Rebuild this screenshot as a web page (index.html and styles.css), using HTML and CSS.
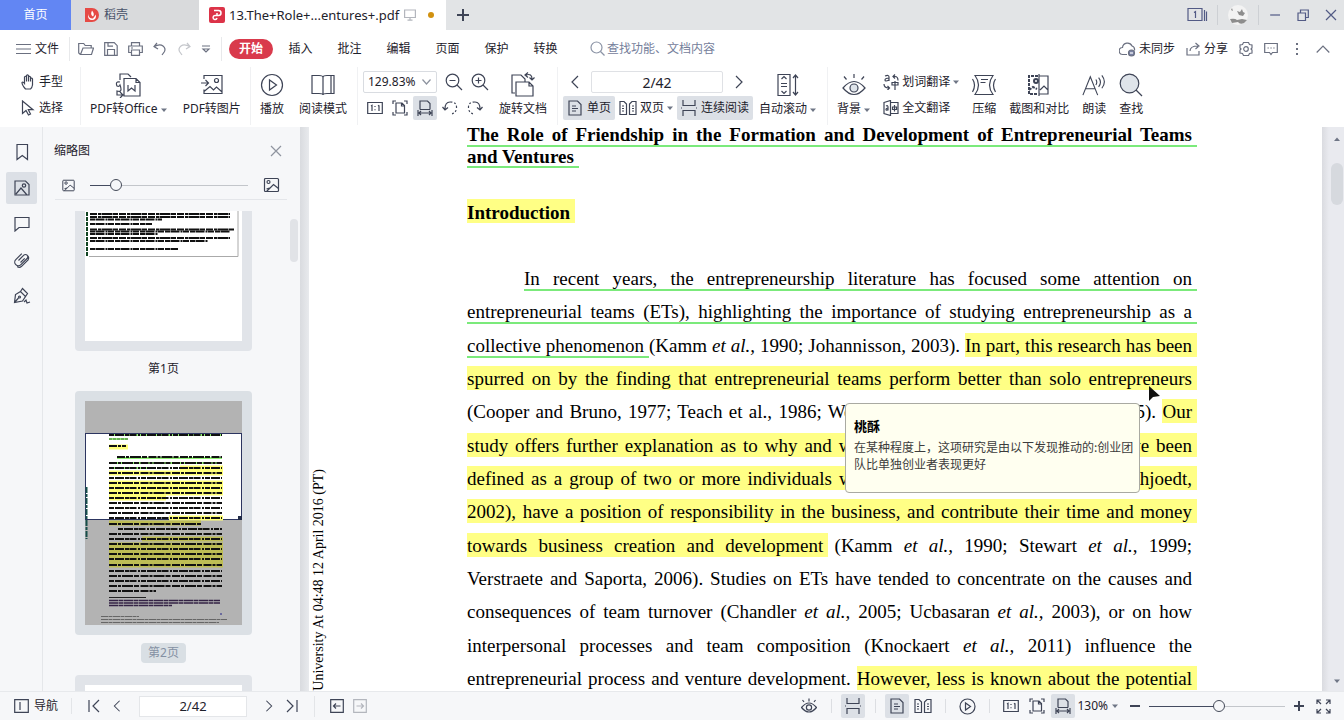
FILE: index.html
```html
<!DOCTYPE html>
<html lang="zh-CN">
<head>
<meta charset="utf-8">
<meta name="viewport" content="width=device-width, initial-scale=1">
<title>13.The+Role+...entures+.pdf</title>
<link rel="stylesheet" href="styles.css">
</head>
<body>
<svg class="defs" aria-hidden="true">
  <symbol id="one" viewBox="0 0 16 16"><path d="M.7 2.5h14.6v11H.7zM4 6l1-.7V11M12 5.3V11M11 6l1-.7M8 6v1M8 9.3v1"/></symbol>
  <symbol id="fit" viewBox="0 0 16 16"><path d="M4 3h6l2.500 2.500V13H4zM9.500 3v3h3M1 4V1h3M12 1h3v3M1 12v3h3M12 15h3v-3"/></symbol>
  <symbol id="fitw" viewBox="0 0 16 16"><path d="M3 9.500V1h7.500l2.500 2.500v6M3 9.500h10M1 10v6M15 10v6M2 13h12M4 11l-2 2 2 2M12 11l2 2-2 2"/></symbol>
  <symbol id="single" viewBox="0 0 16 16"><path d="M2 1h8.500L14 4.500V15H2zM5 6h4M5 8.500h6M5 11h4"/></symbol>
  <symbol id="double" viewBox="0 0 18 16"><path d="M1 1.500h4l2.500 2.500v10.500H1zM17 1.500h-4L10.500 4v10.500H17zM3 6h2M3 8.500h2M3 11h2M13 6h2M13 8.500h2M13 11h2"/></symbol>
  <symbol id="cont" viewBox="0 0 16 16"><path d="M2 0v5.500h12V0M2 16v-5.500h12V16M0 8h1M15 8h1"/></symbol>
  <symbol id="left" viewBox="0 0 16 16"><path d="M11 2L5 8l6 6"/></symbol>
  <symbol id="right" viewBox="0 0 16 16"><path d="M5 2l6 6-6 6"/></symbol>
  <symbol id="caret" viewBox="0 0 6 4"><path class="solid" d="M0 .5h6L3 4z"/></symbol>
  <symbol id="play" viewBox="0 0 24 24"><circle cx="12" cy="12" r="10.500"/><path d="M9.500 7v10l7-5z"/></symbol>
  <symbol id="eye" viewBox="0 0 24 24"><path d="M1 15q11-13 22 0-11 13-22 0zM12 1v4M2 3.500l2.500 3M22 3.500l-2.500 3"/><circle cx="12" cy="15" r="4" class="tint"/></symbol>
  <symbol id="eye-small" viewBox="0 0 16 16"><path d="M.5 9.500q7.500-9 15 0-7.500 9-15 0zM8 .5v3M1.500 2l1.500 2M14.500 2L13 4"/><circle cx="8" cy="9.500" r="2.600"/></symbol>
  <symbol id="picture" viewBox="0 0 16 16"><rect x="1" y="1.500" width="14" height="13" rx="1"/><circle cx="5" cy="5" r="1.500"/><path d="M3 14.500l7-7 5 4M6 11l-3 1"/></symbol>
</svg>

<header class="titlebar">
  <nav class="tabs">
    <button class="tab home">首页</button>
    <button class="tab docer">
      <svg width="14" height="14" viewBox="0 0 14 14" stroke="none" class="flat"><path d="M0 0h7a7 7 0 0 1 7 7 7 7 0 0 1-7 7H0z" fill="#e64a45"/><path d="M7 2.500q3 3.500 1 6Q5 7 7 2.500zM3 6q1 5 5 4.500l3-4q.5 5.500-4 5.500T3 6z" fill="#fff"/></svg>
      <span>稻壳</span>
    </button>
    <button class="tab active">
      <svg width="16" height="16" viewBox="0 0 16 16" class="flat"><rect width="16" height="16" rx="2" fill="#dc3348"/><path d="M5 3.500h4.500a2.500 2.500 0 0 1 0 5H8V6M8 8.500H6a2 2 0 1 0 2 2.500" fill="none" stroke="#fff" stroke-width="1.500"/></svg>
      <span class="file-name">13.The+Role+...entures+.pdf</span>
      <svg class="pale" width="12" height="12" viewBox="0 0 12 12"><path d="M.6 1h10.800v7.500H.6zM6 8.500V11M3.500 11.200h5"/></svg>
      <i class="dot"></i>
    </button>
    <button class="tab plus" aria-label="新建标签"><svg width="12" height="12" viewBox="0 0 12 12"><path d="M6 0v12M0 6h12" stroke-width="2"/></svg></button>
  </nav>
  <div class="window-tools">
    <button aria-label="窗口数"><svg width="22" height="16" viewBox="0 0 22 16"><path d="M1 1.500h14v12H1zM17.500 3v11M19.500 4.500V14M7 5.500l1.500-1V11"/></svg></button>
    <button class="user" aria-label="账户"><svg width="20" height="20" viewBox="0 0 20 20" class="flat"><circle cx="10" cy="10" r="10" fill="#f3f3f3"/><path d="M9 6l3 1 2-3 1 3 2 1-2 3-4-1zM2 14q5-1 7 1l5-1 5 1-3 3q-4 2-6-1l-6 1zM3 5l1-2 1 3z" fill="#8d8d8d"/></svg></button>
    <button aria-label="最小化"><svg width="12" height="12" viewBox="0 0 12 12"><path d="M1 6h10"/></svg></button>
    <button aria-label="还原"><svg width="12" height="12" viewBox="0 0 12 12"><path d="M1 4h7.500v7.500H1zM3.500 4V1H11.300v7.500H8.500"/></svg></button>
    <button aria-label="关闭"><svg width="12" height="12" viewBox="0 0 12 12"><path d="M1 1l10 10M11 1L1 11"/></svg></button>
  </div>
</header>

<div class="menubar">
  <button class="file-menu"><svg width="15" height="12" viewBox="0 0 15 12"><path d="M0 1.500h15M0 6h15M0 10.500h15"/></svg>文件</button>
  <div class="quick">
    <button aria-label="打开"><svg width="16" height="14" viewBox="0 0 16 14"><path d="M2.500 12.500L.7 11V1.500h5l1.500 2h6V6M2.500 12.500L5 6h10.500l-2 6.500z"/></svg></button>
    <button aria-label="保存"><svg width="14" height="14" viewBox="0 0 14 14"><path d="M.7.700h9.500l3 3v9.600H.7zM3.500 13V7.500h7V13M4 .7v3.500h5"/></svg></button>
    <button aria-label="打印"><svg width="15" height="14" viewBox="0 0 15 14"><path d="M3.500 4V.7h8V4M3.500 10.500H.7V4h13.600v6.500h-2.800M3.500 8h8v5.300h-8zM3 6h2"/></svg></button>
    <button aria-label="撤销"><svg width="14" height="14" viewBox="0 0 14 14"><path d="M4 1L1 4.500 5 7M1 4.500q6-3 9-.5t1.500 5.500L9 13"/></svg></button>
    <button class="pale" aria-label="重做"><svg width="14" height="14" viewBox="0 0 14 14"><path d="M10 1l3 3.500L9 7M13 4.500q-6-3-9-.5T2.500 9.500L5 13"/></svg></button>
    <button aria-label="更多"><svg width="10" height="10" viewBox="0 0 10 10"><path d="M1 2h8M2 5l3 3 3-3z"/></svg></button>
  </div>
  <nav class="menus">
    <button class="current">开始</button>
    <button>插入</button><button>批注</button><button>编辑</button><button>页面</button><button>保护</button><button>转换</button>
  </nav>
  <label class="search"><svg width="15" height="15" viewBox="0 0 15 15"><circle cx="6.500" cy="6.500" r="5.500"/><path d="M10.500 10.500l4 4"/></svg><input type="text" placeholder="查找功能、文档内容"></label>
  <div class="menu-right">
    <button><svg width="17" height="16" viewBox="0 0 17 16"><path d="M8 13.500H4A3.500 3.500 0 0 1 3.500 6.500 5 5 0 0 1 13 5q3 .8 2.500 4.500"/><circle cx="12.500" cy="12" r="3" fill="#7b83a6"/><path d="M11 12h3" class="white"/></svg>未同步</button>
    <button><svg width="15" height="14" viewBox="0 0 15 14"><path d="M1 6v7h12V9M4 9q0-5 8-5M9.500 1l3.500 3-3.500 3"/></svg>分享</button>
    <button aria-label="设置"><svg width="14" height="16" viewBox="0 0 14 16"><path d="M4.500 1.500h5l1 2 2.500.5v3l-1 1 1 1v3l-2.500.5-1 2h-5l-1-2L1 12V9l1-1-1-1V4l2.500-.5z"/><circle cx="7" cy="8" r="2.300"/></svg></button>
    <button aria-label="反馈"><svg width="14" height="14" viewBox="0 0 14 14"><path d="M.7 1.500h12.600v9H8.500L7 12.500l-1.500-2H.7zM3.500 6h1.300M6.400 6h1.300M9.300 6h1.300"/></svg></button>
    <button aria-label="更多选项"><svg width="4" height="14" viewBox="0 0 4 14"><path d="M2 1v2M2 6v2M2 11v2" stroke-width="2"/></svg></button>
    <button aria-label="收起功能区"><svg width="14" height="8" viewBox="0 0 14 8"><path d="M.7 7.500L7 1l6.300 6.500"/></svg></button>
  </div>
</div>

<div class="toolbar">
  <section class="group g-mode">
    <div class="stack">
      <button class="row"><svg width="14" height="16" viewBox="0 0 14 16"><path d="M4.500 15Q1 11 1 8.500q1-1 2.500 1V3q1-1.500 2 0V1.500q1-1.300 2 0V3q1-1.300 2 0v1.500q1.500-1 2 .5v6q-.5 3-2 4zM5.500 3v4.500M7.500 2v5.500M9.500 3v4.500"/></svg>手型</button>
      <button class="row"><svg width="14" height="16" viewBox="0 0 14 16"><path d="M1.500 1v12.500L5 10.500 7.500 15l2-1-2.200-4.300H12z"/></svg>选择</button>
    </div>
  </section>
  <section class="group g-convert">
    <button class="big"><svg width="26" height="26" viewBox="0 0 26 26"><path d="M5 8V2h8l3 3M5 10q-5-1-3 4 2 1 3-1 3 8-3 6v4h5M5 20l3 3-3 3M9 6.500h12l4 4V24H9zM21 6.500v4h4M13 13v6l3.500-3 3.500 3v-6"/></svg><span>PDF转Office <svg class="car" width="6" height="4"><use href="#caret"/></svg></span></button>
    <button class="big"><svg width="22" height="22" viewBox="0 0 22 22"><path d="M3 5V1.500h18v18H3v-4M0 9h7M4.500 6l3 3-3 3M3 17.500l6-5 3.500 3.500 3-3 5 4.500"/><circle cx="15.500" cy="6.500" r="2"/></svg><span>PDF转图片</span></button>
  </section>
  <section class="group g-view">
    <button class="big"><svg width="24" height="24"><use href="#play"/></svg><span>播放</span></button>
    <button class="big"><svg width="24" height="22" viewBox="0 0 24 22"><path d="M1 1.500h7q4 0 4 2 0-2 4-2h7v18h-7q-4 0-4 1.500 0-1.500-4-1.500H1zM12 3.500V21M20 1.500v18"/></svg><span>阅读模式</span></button>
  </section>
  <section class="group g-zoom">
    <div class="stack">
      <div class="row line-a">
        <div class="combo"><select aria-label="缩放比例"><option>129.83%</option></select><svg width="9" height="6" viewBox="0 0 9 6"><path d="M.5.500l4 4.500 4-4.500"/></svg></div>
        <button aria-label="缩小"><svg width="18" height="18" viewBox="0 0 18 18"><circle cx="7.500" cy="7.500" r="6.300"/><path d="M12 12l5 5M4.500 7.500h6"/></svg></button>
        <button aria-label="放大"><svg width="18" height="18" viewBox="0 0 18 18"><circle cx="7.500" cy="7.500" r="6.300"/><path d="M12 12l5 5M4.500 7.500h6M7.500 4.500v6"/></svg></button>
      </div>
      <div class="row icons">
        <button class="ic" aria-label="实际大小"><svg width="16" height="16"><use href="#one"/></svg></button>
        <button class="ic" aria-label="适合页面"><svg width="16" height="16"><use href="#fit"/></svg></button>
        <button class="ic on" aria-label="适合宽度"><svg width="16" height="16"><use href="#fitw"/></svg></button>
        <button class="ic" aria-label="逆时针旋转"><svg width="16" height="16" viewBox="0 0 16 16"><path d="M3 9Q3 2 8 2M.5 7L3 10l3-2.500"/><path d="M8 2q7 0 6.500 6T8 14" stroke-dasharray="2 2"/></svg></button>
        <button class="ic" aria-label="顺时针旋转"><svg width="16" height="16" viewBox="0 0 16 16"><path d="M13 9q0-7-5-7M15.500 7L13 10l-3-2.500"/><path d="M8 2Q1 2 1.500 8T8 14" stroke-dasharray="2 2"/></svg></button>
      </div>
    </div>
    <button class="big"><svg width="24" height="25" viewBox="0 0 24 25"><path d="M4 21H1V3h9l4 4v3M5 10h13l4 4v10H5zM18 10v4h4M15 3q6-2 6 4M17 .5L14 3l3 2.500M18.500 5.500L21 8l2.500-2.500"/></svg><span>旋转文档</span></button>
  </section>
  <section class="group g-page">
    <div class="stack">
      <div class="row pager">
        <button aria-label="上一页"><svg width="16" height="16"><use href="#left"/></svg></button>
        <input type="text" value="2/42" aria-label="页码">
        <button aria-label="下一页"><svg width="16" height="16"><use href="#right"/></svg></button>
      </div>
      <div class="row layout">
        <button class="chip on"><svg width="16" height="16"><use href="#single"/></svg>单页</button>
        <button class="chip"><svg width="18" height="16"><use href="#double"/></svg>双页<svg class="car" width="6" height="4"><use href="#caret"/></svg></button>
        <button class="chip on"><svg width="16" height="16"><use href="#cont"/></svg>连续阅读</button>
      </div>
    </div>
    <button class="big"><svg width="22" height="24" viewBox="0 0 22 24"><path d="M1 1.500h12v21H1zM4.500 6L7 3.500 9.500 6M4.500 18L7 20.500 9.500 18M4 10.500h6M4 13.500h6M18.500 2v20M16 5l2.500-3L21 5M16 19l2.500 3 2.500-3"/></svg><span>自动滚动 <svg class="car" width="6" height="4"><use href="#caret"/></svg></span></button>
  </section>
  <section class="group g-tools">
    <button class="big"><svg width="24" height="24"><use href="#eye"/></svg><span>背景 <svg class="car" width="6" height="4"><use href="#caret"/></svg></span></button>
    <div class="stack trans">
      <button class="row"><svg width="16" height="16" viewBox="0 0 16 16"><path d="M2 2q4-1.500 4 1v4M6 4q-4 0-4 2t4 0M9 11h6v-2.500H9zM12 7v9M10 2.500h2q3 0 3 4M12 .5l-2 2 2 2M1 10q0 4 5 4M4.500 12l2 2-2 2"/></svg>划词翻译<svg class="car" width="6" height="4"><use href="#caret"/></svg></button>
      <button class="row"><svg width="16" height="16" viewBox="0 0 16 16"><path d="M1 2.500L7.500.5v15L1 13.500zM7.500 2.500H15v11H7.500M3 6q2-1 2 1v3.500M5 8Q3 8 3 9.500t2 0M9.500 7h4v2.500h-4zM11.500 5v6.500"/></svg>全文翻译</button>
    </div>
    <button class="big"><svg width="24" height="22" viewBox="0 0 24 22"><path d="M3 1.500h18q-7 9.500 0 19H3q7-9.500 0-19zM9 5.500h7M8.500 8.500h5M.5 5q4 6 0 13M23.500 5q-4 6 0 13"/></svg><span>压缩</span></button>
    <button class="big"><svg width="24" height="22" viewBox="0 0 24 22"><path d="M12 0v22M12 2h9v18h-9M13 16l4-4 4 4"/><path d="M11 2H2v18h9M2 16l4-3 4 2" stroke-width="2" stroke-dasharray="3 1"/><circle cx="9" cy="7" r="2" stroke-width="2"/></svg><span>截图和对比</span></button>
    <button class="big"><svg width="24" height="24" viewBox="0 0 26 24"><path d="M1 23L9 3l8 20M4 16h10M15 6q2 3 0 6M18 4q4 5 0 10M21.500 1.500q5.500 7 0 14"/></svg><span>朗读</span></button>
    <button class="big"><svg width="24" height="24" viewBox="0 0 24 24"><circle cx="10.500" cy="10.500" r="9.300" class="tint"/><path d="M17 17l6 6"/></svg><span>查找</span></button>
  </section>
</div>

<div class="workspace">
  <nav class="rail">
    <button aria-label="书签"><svg width="16" height="18" viewBox="0 0 16 18"><path d="M3 1.500h10.500v15l-5.200-4-5.300 4z"/></svg></button>
    <button class="on" aria-label="缩略图"><svg width="16" height="16" viewBox="0 0 16 16"><path d="M1 1h10.500L15 4.500V15H1zM2 14l5-6 6 7"/><circle cx="10" cy="5.500" r="1.700"/></svg></button>
    <button aria-label="批注"><svg width="16" height="16" viewBox="0 0 16 16"><path d="M1 1.500h14v10H5L1 15z"/></svg></button>
    <button aria-label="附件"><svg width="16" height="16" viewBox="0 0 16 16"><path d="M4.500 8.500L9.800 3.200a2.300 2.300 0 0 1 3.300 3.300l-6.200 6.200a3.600 3.600 0 0 1-5.100-5.100L7.800 1.600M13.100 6.500L7 12.600M6.500 10.500l4.200-4.200M13.100 3.200a3.600 3.600 0 0 1 1 4.600l-6.500 6.500a3.600 3.600 0 0 1-4.500.3"/></svg></button>
    <button aria-label="签名"><svg width="18" height="18" viewBox="0 0 18 18"><path d="M1.500 15.500l1-8 5-3 5 5-3 4.500zM7.500 4.500l2-3 5 5-2 3M1.500 15.500L5.500 11M11 15l2-2 1 3 3-1"/><circle cx="6.500" cy="10" r="1"/></svg></button>
  </nav>
  <aside class="panel">
    <div class="panel-head"><h2>缩略图</h2><button aria-label="关闭面板"><svg width="12" height="12" viewBox="0 0 12 12"><path d="M1 1l10 10M11 1L1 11"/></svg></button></div>
    <div class="panel-size"><svg width="13" height="13"><use href="#picture"/></svg><input class="s-thumb" type="range" min="0" max="100" value="14" aria-label="缩略图大小"><svg width="17" height="16"><use href="#picture"/></svg></div>
    <div class="thumbs">
      <div class="thumb-list">
        <div class="thumb first">
          <svg viewBox="0 0 157 130" class="flat"><rect width="157" height="130" fill="#fff"/><path d="M4 45.500h149V0" stroke="#aaa"/><path d="M2 1v44" stroke="#142" stroke-width="2" stroke-dasharray="4 1"/><g stroke="#111" stroke-width="2"><path d="M5 3h140M5 6h140M5 18.500h145M5 27h140" stroke-dasharray="7 1 3 .5 11 .5 5 1"/><path d="M5 8.500h72M5 13h62M5 20.500h140M5 23h68M5 30h118M5 38h88" stroke-dasharray="5 .5 9 1 2 .5 6 1"/></g></svg>
        </div>
        <span class="num">第1页</span>
        <div class="thumb current">
          <svg viewBox="0 0 157 224" class="flat"><rect width="157" height="224" fill="#b3b3b3"/><rect x=".5" y="32.500" width="156" height="86" fill="#fff" stroke="#2c3560"/>
            <path d="M24 34h113M24 38h19M32 57h105M24 62h113M24 67h40" stroke="#8fef70" stroke-width="2"/>
            <path d="M24 46h19M95 67h43M24 72h114M24 82h114M24 87h114M24 92h114M24 97h57M84 117h54" stroke="#ffff78" stroke-width="5"/><path d="M24 122h92M57 138h81M24 144h114M24 149h114M24 154h114M24 159h114M24 164h114" stroke="#bdbd55" stroke-width="5"/>
            <g stroke="#111" stroke-width="2"><path d="M24 34h113M24 67h113M24 77h113M24 87h113M24 97h113M24 107h113M24 117h113M33 128h104M24 138h113M24 148h113M24 158h113M24 170h113M24 180h113" stroke-dasharray="5 1 9 1 4 .5 7 1.500 2 1"/><path d="M24 45h17M32 56h105M24 62h113M24 72h113M24 82h113M24 92h113M24 102h113M24 112h113M24 123h92M24 133h113M24 143h113M24 153h113M24 164h113M24 175h113M24 185h113M24 190h47" stroke-dasharray="8 1 3 1 11 1 5 1.500"/></g>
            <path d="M24 38h19" stroke="#4a6a40" stroke-dasharray="3 1"/><path d="M24 196.500h37" stroke="#222"/><path d="M24 199.500h111M24 202h111M24 204.500h63" stroke="#324" stroke-width="1.500" stroke-dasharray="9 .5 5 .5"/><path d="M16 215.500h38M16 218.500h126M16 221.500h118" stroke="#666" stroke-dasharray="7 .5 4 .5"/><path d="M1.500 86v52" stroke="#164f4b" stroke-width="2" stroke-dasharray="6 1 3 1"/><path d="M153 115h4v4h-4z" fill="#222c48"/><path d="M135 213h2" stroke="#228"/></svg>
        </div>
        <span class="num sel">第2页</span>
        <div class="thumb third"><div class="blank"></div></div>
      </div>
      <div class="thumb-scroll"><i></i></div>
    </div>
  </aside>
  <div class="splitter"></div>
  <main class="doc">
    <div class="stamp">University At 04:48 12 April 2016 (PT)</div>
    <article>
      <h1><span class="just"><u>The Role of Friendship in the Formation and Development of Entrepreneurial Teams</u></span><span><u class="tight">and Ventures</u></span></h1>
      <h3><mark>Introduction</mark></h3>
      <div class="body">
        <p class="indent"><u>In recent years, the entrepreneurship literature has focused some attention on</u></p>
        <p><u>entrepreneurial teams (ETs), highlighting the importance of studying entrepreneurship as a</u></p>
        <p><u class="short">collective phenomenon </u>(Kamm <em>et al.,</em> 1990; Johannisson, 2003). <mark>In part, this research has been</mark></p>
        <p><mark>spurred on by the finding that entrepreneurial teams perform better than solo entrepreneurs</mark></p>
        <p>(Cooper and Bruno, 1977; Teach et al., 1986; Weinzimmer, 1997; Lechner, 2001, 2005). <mark>Our</mark></p>
        <p><mark>study offers further explanation as to why and when ETs are more effective. ETs have been</mark></p>
        <p><mark>defined as a group of two or more individuals who jointly establish one business (Schjoedt,</mark></p>
        <p><mark>2002), have a position of responsibility in the business, and contribute their time and money</mark></p>
        <p><mark>towards business creation and development</mark> (Kamm <em>et al.,</em> 1990; Stewart <em>et al.</em>, 1999;</p>
        <p>Verstraete and Saporta, 2006). Studies on ETs have tended to concentrate on the causes and</p>
        <p>consequences of team turnover (Chandler <em>et al.,</em> 2005; Ucbasaran <em>et al.,</em> 2003), or on how</p>
        <p>interpersonal processes and team composition (Knockaert <em>et al.,</em> 2011) influence the</p>
        <p>entrepreneurial process and venture development. <mark>However, less is known about the potential</mark></p>
      </div>
    </article>
    <div class="note" role="tooltip"><strong>桃酥</strong><p>在某种程度上，这项研究是由以下发现推动的:创业团队比单独创业者表现更好</p></div>
    <svg class="cursor" width="12" height="17" viewBox="0 0 12 17"><path d="M1 0v15l4-4 7-1z" class="black"/></svg>
  </main>
  <div class="doc-scroll"><svg width="6" height="4" viewBox="0 0 6 4"><path class="solid" d="M0 4h6L3 .5z"/></svg><i></i><svg width="6" height="4"><use href="#caret"/></svg></div>
</div>

<footer class="status">
  <button class="nav-btn"><svg width="15" height="14" viewBox="0 0 15 14"><path d="M.7.700h13.600v12.600H.7zM6 3v8"/></svg>导航</button>
  <div class="status-nav">
    <button aria-label="第一页"><svg width="14" height="14" viewBox="0 0 14 14"><path d="M2 1v12M12 1L6 7l6 6"/></svg></button>
    <button aria-label="前一页"><svg width="14" height="14"><use href="#left"/></svg></button>
    <input type="text" value="2/42" aria-label="当前页">
    <button aria-label="后一页"><svg width="14" height="14"><use href="#right"/></svg></button>
    <button aria-label="最后一页"><svg width="14" height="14" viewBox="0 0 14 14"><path d="M12 1v12M2 1l6 6-6 6"/></svg></button>
  </div>
  <div class="history">
    <button aria-label="后退"><svg width="14" height="14" viewBox="0 0 14 14"><path d="M.7.700h12.600v12.600H.7zM3.500 7h7M6 4.500L3.500 7 6 9.500"/></svg></button>
    <button class="pale" aria-label="前进"><svg width="14" height="14" viewBox="0 0 14 14"><path d="M.7.700h12.600v12.600H.7zM3.500 7h7M8 4.500L10.500 7 8 9.500"/></svg></button>
  </div>
  <div class="status-right">
    <button class="ic" aria-label="护眼"><svg width="16" height="16"><use href="#eye-small"/></svg></button><i class="sep"></i>
    <button class="ic on" aria-label="连续"><svg width="16" height="16"><use href="#cont"/></svg></button><i class="sep"></i>
    <button class="ic on" aria-label="单页视图"><svg width="16" height="16"><use href="#single"/></svg></button>
    <button class="ic" aria-label="双页视图"><svg width="18" height="16"><use href="#double"/></svg></button><i class="sep"></i>
    <button class="ic" aria-label="幻灯片"><svg width="17" height="17" viewBox="0 0 17 17"><circle cx="8.500" cy="8.500" r="7.500"/><path d="M6.500 5v7l5-3.500z"/></svg></button><i class="sep"></i>
    <button class="ic" aria-label="原始大小"><svg width="16" height="16"><use href="#one"/></svg></button>
    <button class="ic" aria-label="整页"><svg width="16" height="16"><use href="#fit"/></svg></button>
    <button class="ic on" aria-label="页宽"><svg width="16" height="16"><use href="#fitw"/></svg></button>
    <button class="pct">130%<svg class="car" width="6" height="4"><use href="#caret"/></svg></button>
    <button class="ic" aria-label="缩小视图"><svg width="10" height="10" viewBox="0 0 10 10"><path d="M0 5h10" stroke-width="2"/></svg></button>
    <input class="s-zoom" type="range" min="0" max="100" value="52" aria-label="缩放">
    <button class="ic" aria-label="放大视图"><svg width="10" height="10" viewBox="0 0 10 10"><path d="M0 5h10M5 0v10" stroke-width="2"/></svg></button>
    <button class="full" aria-label="全屏"><svg width="15" height="15" viewBox="0 0 15 15"><path d="M1 5V1h4M1 1l4 4M10 1h4v4M14 1l-4 4M1 10v4h4M1 14l4-4M14 10v4h-4M14 14l-4-4"/></svg></button>
  </div>
</footer>
</body>
</html>
```

FILE: styles.css
```css
* { box-sizing: border-box; }
body {
  margin: 0;
  height: 100vh;
  display: flex;
  flex-direction: column;
  overflow: hidden;
  background: #fff;
  color: #1e222c;
  font: 12px/16px "Noto Sans", "Noto Sans CJK SC", sans-serif;
}
.defs { display: none; }
button, input, select { font: inherit; color: inherit; }
button {
  display: flex;
  align-items: center;
  justify-content: center;
  padding: 0;
  border: 0;
  background: none;
  white-space: nowrap;
}
svg { flex: none; fill: none; stroke: #3e4456; stroke-width: 1.2; }
svg.flat { stroke: none; stroke-width: 1; }
.solid { fill: #6f7686; stroke: none; }
.black { fill: #111; stroke: none; }
.white { stroke: #fff; }
.tint { fill: #dfe4ea; }
.pale svg, svg.pale { stroke: #b3b6bd; }
.on { background: #dce0e6; border-radius: 2px; }
.car { vertical-align: middle; }

/* title bar */
.titlebar { display: flex; justify-content: space-between; height: 30px; flex: none; background: #e2e4e6; }
.tabs { display: flex; }
.tab { gap: 5px; }
.home { width: 71px; background: #6286f3; color: #fff; }
.docer { width: 128px; padding-left: 14px; justify-content: flex-start; background: #d9dadc; color: #49536a; }
.active { width: 247px; padding-left: 10px; justify-content: flex-start; background: #fff; gap: 4px; }
.file-name { width: 171px; text-align: left; font-size: 13px; }
.dot { width: 6px; height: 6px; margin-left: 8px; border-radius: 50%; background: #d1910f; }
.plus { width: 34px; }
.window-tools { display: flex; align-items: center; padding-right: 7px; gap: 16px; }
.window-tools svg { stroke: #525a85; }
.window-tools .flat { stroke: none; }
.user { padding: 0 10px; margin: 0 -6px 0 -8px; border: solid #cdd0d4; border-width: 0 1px; }

/* menu row */
.menubar { display: flex; align-items: center; height: 37px; flex: none; }
.menubar svg { stroke: #6b7080; }
.file-menu { gap: 4px; padding: 0 10px 0 16px; border-right: 1px solid #e8e9eb; height: 24px; }
.quick { display: flex; gap: 10px; padding: 0 10px 0 8px; border-right: 1px solid #e8e9eb; height: 24px; }
.quick .pale svg { stroke: #c4c6cb; }
.menus { display: flex; padding-left: 7px; }
.menus button { width: 49px; }
.menus .current { width: 44px; height: 20px; margin-right: 3px; border-radius: 10px; background: #d93a4c; color: #fff; font-weight: 700; }
.search { display: flex; align-items: center; flex: 1; gap: 2px; padding-left: 20px; }
.search svg { stroke: #8c94a6; }
.search input { width: 160px; padding: 0; border: 0; background: none; }
.search input::placeholder { color: #75809b; opacity: 1; }
.menu-right { display: flex; padding-right: 14px; gap: 11px; }
.menu-right button { gap: 3px; }
.menu-right button:nth-child(n+5) { margin-left: 6px; }

/* toolbar */
.toolbar { display: flex; height: 60px; flex: none; }
.group { display: flex; flex: none; padding-top: 3px; height: 58px; border-right: 1px solid #f0f1f3; }
.group:last-child { border: 0; }
.stack { display: flex; flex-direction: column; gap: 2px; }
.row { display: flex; align-items: center; justify-content: flex-start; height: 24px; gap: 4px; }
.big { flex-direction: column; justify-content: flex-start; padding-top: 1px; }
.big > svg { margin: auto 0; }
.big > span { height: 22px; line-height: 22px; margin-bottom: 5px; }
.g-mode { width: 81px; padding-left: 21px; }
.g-convert { width: 170px; padding-left: 9px; gap: 16px; }
.g-view { width: 107px; padding-left: 9px; gap: 15px; }
.g-zoom { width: 200px; padding-left: 5px; gap: 10px; }
.g-page { width: 270px; padding-left: 5px; gap: 6px; }
.g-tools { padding-left: 9px; gap: 13px; }
.line-a { gap: 8px; }
.combo { display: flex; align-items: center; width: 74px; height: 22px; padding: 0 5px 0 4px; border: 1px solid #d9dce1; border-radius: 2px; }
.combo select { appearance: none; flex: 1; min-width: 0; padding: 0; border: 0; background: none; }
.combo svg { stroke: #8c929e; }
.icons { gap: 1px; }
.ic { width: 24px; height: 24px; }
.pager { padding: 0 4px; gap: 8px; }
.pager input { width: 132px; height: 22px; border: 1px solid #dfe1e5; border-radius: 2px; text-align: center; font-size: 14px; }
.layout { gap: 4px; }
.chip { gap: 4px; height: 24px; padding: 0 4px; }
.chip:nth-child(2) { gap: 3px; padding: 0; }
.trans .row { gap: 3px; }

/* side */
.workspace { display: flex; flex: 1; min-height: 0; }
.rail { display: flex; flex-direction: column; gap: 4px; width: 43px; padding: 9px 5px 0 6px; background: #f6f7f9; border-right: 1px solid #e5e7ea; }
.rail button { height: 32px; }
.panel { display: flex; flex-direction: column; width: 257px; background: #f6f7f9; }
.panel-head { display: flex; justify-content: space-between; align-items: center; height: 48px; padding: 0 18px 0 11px; }
.panel-head h2 { margin: 0; font-size: 12px; font-weight: 400; }
.panel-head svg { stroke: #8f949f; }
.panel-size { display: flex; align-items: center; gap: 15px; height: 25px; margin: 0 13px 0 12px; padding: 0 7px 4px; border-bottom: 1px solid #e4e6ea; }
input[type="range"] { appearance: none; margin: 0; height: 14px; min-width: 0; background: none; }
.s-thumb { flex: 1; }
input[type="range"]::-webkit-slider-runnable-track { height: 1px; }
.s-thumb::-webkit-slider-runnable-track { background: linear-gradient(90deg, #444b60 16%, #c3c6cb 16%); }
.s-zoom::-webkit-slider-runnable-track { background: linear-gradient(90deg, #444b60 52%, #c3c6cb 52%); }
input[type="range"]::-webkit-slider-thumb { appearance: none; width: 12px; height: 12px; margin-top: -6px; border: 1px solid #454b59; border-radius: 50%; background: #f6f7f9; }
.thumbs { display: flex; flex: 1; min-height: 0; margin-top: 11px; overflow: hidden; }
.thumb-list { display: flex; flex-direction: column; align-items: center; flex: 1; }
.thumb { flex: none; width: 177px; padding: 10px; border-radius: 4px; background: #e1e4e9; }
.thumb svg { display: block; width: 100%; }
.thumb.first { padding-top: 0; border-radius: 0 0 4px 4px; }
.thumb.current { background: #dbe0e5; }
.num { flex: none; margin: 8px 0 12px; padding: 2px 7px; border-radius: 4px; font-size: 12px; }
.sel { background: #d9dfe4; color: #8490a3; }
.blank { height: 60px; background: #fff; }
.thumb-scroll { width: 16px; padding: 8px 2px 0 6px; }
.thumb-scroll i { display: block; height: 43px; border-radius: 4px; background: #e1e3e7; }
.splitter { width: 9px; background: linear-gradient(90deg, #d9dbdf, #e8eaed); }

/* document */
.doc { position: relative; display: flex; flex: 1; min-width: 0; overflow: hidden; font-family: "Liberation Serif", "Times New Roman", serif; color: #000; }
.stamp { writing-mode: vertical-rl; transform: rotate(180deg); width: 20px; margin: 0 0 0 1px; font-size: 14px; line-height: 18px; align-self: flex-end; white-space: nowrap; }
article { flex: 1; min-width: 0; padding: 0 130px 0 137px; font-size: 19px; }
h1, h3 { margin: 0; font-size: 19px; line-height: 22px; font-weight: 700; }
h1 { margin: -3px 0 34px; }
h1 span { display: block; height: 22px; white-space: nowrap; }
.just, .body p { text-align: justify; text-align-last: justify; }
u { text-decoration: none; border-bottom: 2px solid #7bea7b; padding-right: 5px; margin-right: -5px; }
u.tight { display: inline-block; line-height: 18px; }
u.short { padding: 0; margin: 0; }
mark { background: #ffff85; color: inherit; padding: 2px 0 1px; box-shadow: 5px 0 #ffff85; }
h3 mark { padding: 3px 0 0; }
.body { padding-top: 38px; }
.body p { margin: 0; line-height: 33px; white-space: nowrap; }
.body p:nth-child(3n+2) { padding-bottom: 1px; }
.body .indent { padding-left: 57px; }
.note { position: absolute; left: 536px; top: 276px; width: 295px; height: 90px; padding: 13px 4px 13px 8px; border: 1px solid #a9aaa2; border-radius: 4px; background: #fffff0; font: 12px/17px "Noto Sans CJK SC", sans-serif; color: #3c3c3c; }
.note strong { display: block; margin-bottom: 3px; font-size: 13px; line-height: 18px; color: #000; }
.note p { margin: 0; }
.cursor { position: absolute; left: 839px; top: 259px; }
.doc-scroll { display: flex; flex-direction: column; align-items: center; width: 22px; padding: 10px 0 8px 7px; background: linear-gradient(90deg, #dadbe0, #e9eaef 7px); }
.doc-scroll i { width: 12px; height: 42px; margin: 22px 0 auto; border-radius: 6px; background: #d6d9de; }

/* status bar */
.status { display: flex; align-items: center; height: 29px; flex: none; background: #f6f7f9; border-top: 1px solid #e7e9ec; }
.nav-btn { gap: 5px; padding: 0 13px 0 14px; border-right: 1px solid #e3e5e8; }
.status-nav { display: flex; align-items: center; gap: 9px; padding: 0 15px; border-right: 1px solid #e3e5e8; }
.status-nav input { width: 108px; height: 21px; margin: 0 6px; border: 1px solid #e4e6e9; background: #fff; text-align: center; font-size: 13px; }
.history { display: flex; gap: 9px; padding-left: 15px; }
.status-right { display: flex; align-items: center; gap: 2px; margin-left: auto; padding-right: 11px; }
.sep { width: 16px; height: 14px; background: linear-gradient(#dcdee2, #dcdee2) center / 1px 14px no-repeat; }
.pct { gap: 4px; padding-right: 3px; }
.s-zoom { width: 136px; margin: 0 3px 0 2px; }
.full { width: 20px; height: 24px; }
```
